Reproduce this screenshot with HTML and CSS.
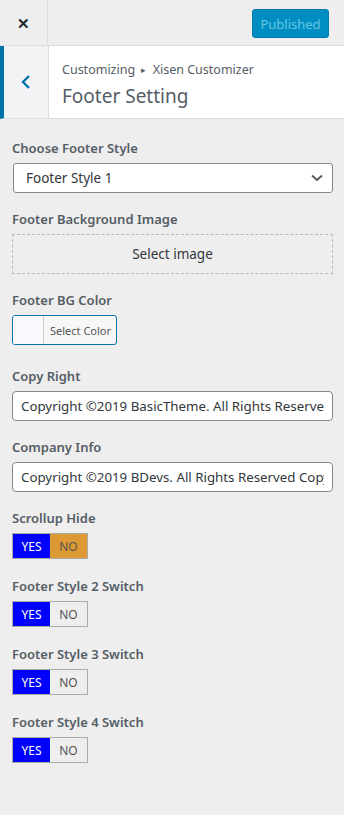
FILE: index.html
```html
<!DOCTYPE html>
<html lang="en">
<head>
    <meta charset="UTF-8">
    <meta name="viewport" content="width=device-width, initial-scale=1.0">
    <title>Footer Setting</title>
    <link rel="stylesheet" href="styles.css">
</head>
<body>
    <div class="top-bar">
        <div class="close-btn">&#x2715;</div>
        <div class="publish-area">
            <button class="publish-btn" disabled>Published</button>
        </div>
    </div>

    <div class="section-head">
        <div class="back-btn">
            <svg width="12" height="16" viewBox="0 0 12 16"><path d="M9 2 L3 8 L9 14" fill="none" stroke="#0073aa" stroke-width="2.4"/></svg>
        </div>
        <div class="section-title">
            <span class="crumb">Customizing <span class="arrow">&#9656;</span> Xisen Customizer</span>
            <h3>Footer Setting</h3>
        </div>
    </div>

    <div class="controls">
        <div class="control">
            <label>Choose Footer Style</label>
            <div class="select">
                <span>Footer Style 1</span>
                <svg width="12" height="8" viewBox="0 0 12 8"><path d="M1 1.5 L6 6 L11 1.5" fill="none" stroke="#555" stroke-width="1.8"/></svg>
            </div>
        </div>

        <div class="control">
            <label>Footer Background Image</label>
            <div class="image-box">Select image</div>
        </div>

        <div class="control control-color">
            <label>Footer BG Color</label>
            <div class="color-btn">
                <span class="swatch"></span>
                <span class="color-text">Select Color</span>
            </div>
        </div>

        <div class="control">
            <label>Copy Right</label>
            <input type="text" class="text-input" value="Copyright ©2019 BasicTheme. All Rights Reserved">
        </div>

        <div class="control">
            <label>Company Info</label>
            <input type="text" class="text-input" value="Copyright ©2019 BDevs. All Rights Reserved Copyright">
        </div>

        <div class="control control-switch">
            <label>Scrollup Hide</label>
            <div class="switch"><span class="yes">YES</span><span class="no no-on">NO</span></div>
        </div>

        <div class="control control-switch">
            <label>Footer Style 2 Switch</label>
            <div class="switch"><span class="yes">YES</span><span class="no">NO</span></div>
        </div>

        <div class="control control-switch">
            <label>Footer Style 3 Switch</label>
            <div class="switch"><span class="yes">YES</span><span class="no">NO</span></div>
        </div>

        <div class="control control-switch">
            <label>Footer Style 4 Switch</label>
            <div class="switch"><span class="yes">YES</span><span class="no">NO</span></div>
        </div>
    </div>
</body>
</html>
```

FILE: styles.css
```css
body {
    margin: 0;
    background: #eeeeee;
    font-family: "Noto Sans", "Open Sans", sans-serif;
    color: #555d66;
}
.top-bar {
    display: flex;
    height: 45px;
    border-bottom: 1px solid #dddddd;
    background: #eeeeee;
}
.close-btn {
    width: 47px;
    border-right: 1px solid #dddddd;
    display: flex;
    align-items: center;
    justify-content: center;
    font-size: 15px;
    font-weight: bold;
    color: #23282d;
}
.publish-area {
    flex: 1;
    display: flex;
    justify-content: flex-end;
    padding: 9px 15px 0 0;
}
.publish-btn {
    width: 77px;
    height: 29px;
    background: #008ec2;
    color: #66c6e4;
    border: 1px solid #007cb2;
    border-radius: 3px;
    font-family: inherit;
    font-size: 13px;
    padding: 0;
}
.section-head {
    display: flex;
    height: 72px;
    background: #ffffff;
    border-left: 4px solid #0073aa;
    border-bottom: 1px solid #dddddd;
}
.back-btn {
    width: 44px;
    background: #f3f3f5;
    border-right: 1px solid #dddddd;
    display: flex;
    align-items: center;
    justify-content: center;
}
.section-title {
    padding: 15px 0 0 13px;
}
.crumb {
    display: block;
    font-size: 12.5px;
    line-height: 18px;
    color: #555d66;
}
.arrow {
    font-size: 9px;
    vertical-align: 1px;
    padding: 0 3px;
}
.section-title h3 {
    margin: 4px 0 0;
    font-size: 19px;
    font-weight: normal;
    line-height: 26px;
    color: #555d66;
}
.controls {
    padding: 19px 11px 40px 12px;
}
.control {
    margin-bottom: 16px;
}
.control-color {
    margin-bottom: 21px;
}
.control-switch {
    margin-bottom: 17px;
}
.control label {
    display: block;
    font-size: 13px;
    font-weight: 600;
    line-height: 20px;
    margin-bottom: 5px;
}
.select {
    display: flex;
    align-items: center;
    justify-content: space-between;
    height: 28px;
    margin-left: 1px;
    padding: 0 9px 0 12px;
    background: #ffffff;
    border: 1px solid #7e8993;
    border-radius: 3px;
    font-size: 13.5px;
    color: #32373c;
}
.image-box {
    height: 38px;
    border: 1px dashed #b4b9be;
    display: flex;
    align-items: center;
    justify-content: center;
    font-size: 13.5px;
    color: #32373c;
}
.color-btn {
    display: flex;
    width: fit-content;
    height: 28px;
    border: 1px solid #0073aa;
    border-radius: 3px;
    background: #f7f7f7;
    overflow: hidden;
}
.swatch {
    width: 30px;
    background: #f8f8fd;
    border-right: 1px solid #cccccc;
}
.color-text {
    display: flex;
    align-items: center;
    padding: 0 5px 0 6px;
    font-size: 11px;
    color: #555555;
}
.text-input {
    display: block;
    box-sizing: border-box;
    width: 100%;
    height: 30px;
    margin: 0;
    padding: 0 8px;
    border: 1px solid #7e8993;
    border-radius: 4px;
    background: #ffffff;
    font-family: inherit;
    font-size: 13.3px;
    color: #32373c;
}
.switch {
    display: flex;
    width: fit-content;
    height: 24px;
    border: 1px solid #aaaaaa;
    font-size: 12px;
}
.switch span {
    width: 37px;
    display: flex;
    align-items: center;
    justify-content: center;
}
.yes {
    background: #0000ff;
    color: #ffffff;
}
.no {
    background: #eeeeee;
    color: #555555;
}
.no-on {
    background: #dd9933;
}
```
